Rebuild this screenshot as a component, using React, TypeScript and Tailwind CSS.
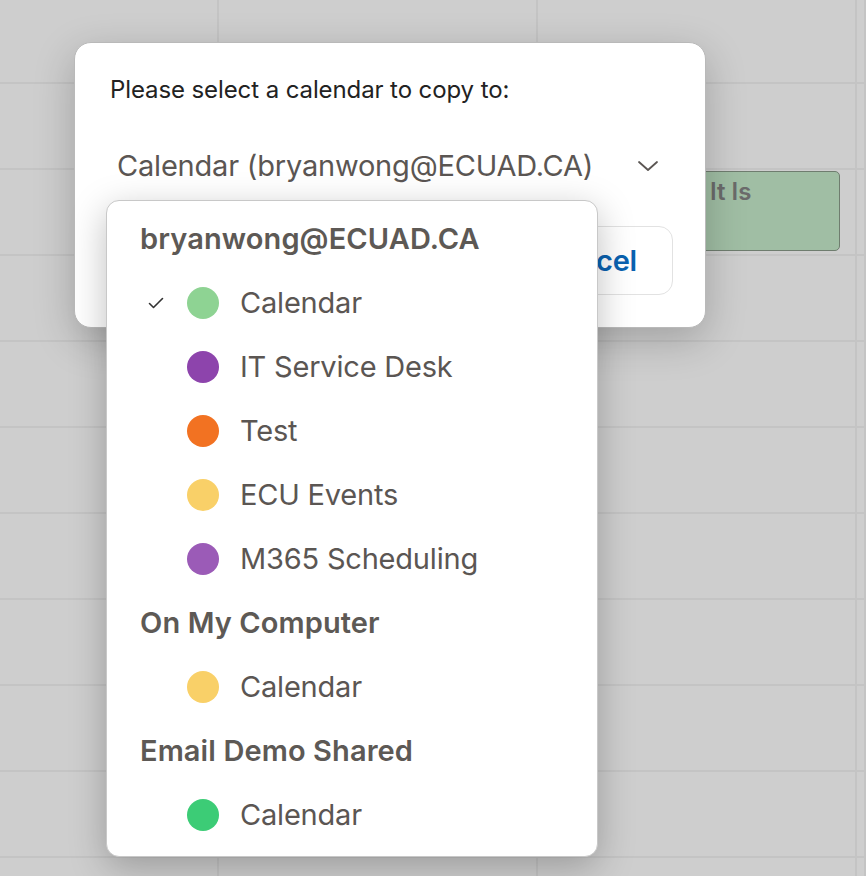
import React from "react";

const rows = [84, 86, 86, 86, 86, 86, 86, 86, 86, 86, 86];

function Background() {
  return (
    <div className="grid grid-cols-[219px_319px_319px_1fr] bg-[#cecece]">
      {rows.map((h, r) =>
        [0, 1, 2, 3].map((c) => (
          <div
            key={`${r}-${c}`}
            className="relative border-b-2 border-r-2 border-[#c4c4c4]"
            style={{ height: h }}
          >
            {r === 2 && c === 2 && (
              <div className="absolute left-[161px] top-[1px] w-[141px] h-[80px] rounded-[5px] border border-[#6f7d6f] bg-[#a0bea4] pl-[10px] pt-[4px]">
                <span className="text-[24px] font-semibold text-[#6b6b6b] leading-[32px]">It Is</span>
              </div>
            )}
          </div>
        ))
      )}
    </div>
  );
}

const dots: { kind: "h" | "i"; label: string; color?: string; checked?: boolean }[] = [
  { kind: "h", label: "bryanwong@ECUAD.CA" },
  { kind: "i", label: "Calendar", color: "#8ed393", checked: true },
  { kind: "i", label: "IT Service Desk", color: "#8d44ac" },
  { kind: "i", label: "Test", color: "#f27222" },
  { kind: "i", label: "ECU Events", color: "#f9d068" },
  { kind: "i", label: "M365 Scheduling", color: "#9b5bb7" },
  { kind: "h", label: "On My Computer" },
  { kind: "i", label: "Calendar", color: "#f9d068" },
  { kind: "h", label: "Email Demo Shared" },
  { kind: "i", label: "Calendar", color: "#3ccc76" },
];

export default function App() {
  return (
    <div className="relative w-[866px] h-[876px] overflow-hidden font-['Inter','Noto_Sans',sans-serif]">
      <Background />

      {/* Dialog */}
      <div className="absolute left-[74px] top-[42px] w-[632px] h-[286px] rounded-[17px] bg-white border border-[#b9b9b9] shadow-[0_12px_40px_rgba(0,0,0,0.22)] flex flex-col pl-[35px] pr-[32px] pt-[32px]">
        <div className="text-[24px] text-[#222] leading-[30px] tracking-[-0.1px]">Please select a calendar to copy to:</div>
        <div className="mt-[43px] flex items-center justify-between pl-[7px] pr-[14px]">
          <span className="text-[29px] text-[#5b5653] leading-[36px] tracking-[-0.2px]">Calendar (bryanwong@ECUAD.CA)</span>
          <svg width="22" height="14" viewBox="0 0 22 14" fill="none">
            <path d="M2 3l9 8 9-8" stroke="#5b5653" strokeWidth="1.8" strokeLinecap="round" strokeLinejoin="round" />
          </svg>
        </div>
        <div className="mt-[42px] flex justify-end gap-4">
          <div className="h-[69px] w-[170px] rounded-[14px] border border-[#e2e2e2] flex items-center justify-end pr-[35px]">
            <span className="text-[29px] font-semibold text-[#0a62b0] tracking-[-0.2px]">Cancel</span>
          </div>
        </div>
      </div>

      {/* Dropdown menu */}
      <div className="absolute left-[106px] top-[200px] w-[492px] h-[657px] rounded-[13px] bg-white border border-[#c8c8c8] shadow-[0_10px_36px_rgba(0,0,0,0.25)] pt-[6px] pl-[33px]">
        {dots.map((d, i) =>
          d.kind === "h" ? (
            <div key={i} className="h-[64px] flex items-center">
              <span className="text-[29px] font-semibold text-[#5d5955] tracking-[0.1px]">{d.label}</span>
            </div>
          ) : (
            <div key={i} className="h-[64px] flex items-center">
              <div className="w-[47px] flex justify-start pl-[8px]">
                {d.checked && (
                  <svg width="16" height="12" viewBox="0 0 16 12" fill="none">
                    <path d="M1.5 6.5l4 4 9-9" stroke="#333" strokeWidth="1.6" strokeLinecap="round" strokeLinejoin="round" />
                  </svg>
                )}
              </div>
              <span className="w-[32px] h-[32px] rounded-full" style={{ backgroundColor: d.color }} />
              <span className="ml-[21px] text-[29px] text-[#5b5653] tracking-[-0.2px]">{d.label}</span>
            </div>
          )
        )}
      </div>
    </div>
  );
}
